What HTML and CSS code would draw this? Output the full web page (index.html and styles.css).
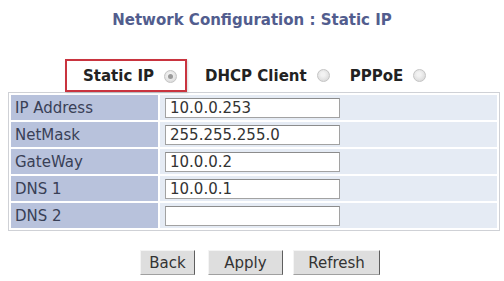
FILE: index.html
```html
<!DOCTYPE html>
<html>
<head>
    <title>Network Configuration</title>
    <link rel="stylesheet" href="styles.css">
</head>
<body>

<div class="title">Network Configuration : Static IP</div>

<div class="modes">
    <label class="mode mode-active">Static IP <span class="radio checked"></span></label>
    <label class="mode">DHCP Client <span class="radio"></span></label>
    <label class="mode">PPPoE <span class="radio"></span></label>
</div>

<table class="config">
    <tr>
        <td class="name">IP Address</td>
        <td class="value"><input type="text" value="10.0.0.253"></td>
    </tr>
    <tr>
        <td class="name">NetMask</td>
        <td class="value"><input type="text" value="255.255.255.0"></td>
    </tr>
    <tr>
        <td class="name">GateWay</td>
        <td class="value"><input type="text" value="10.0.0.2"></td>
    </tr>
    <tr>
        <td class="name">DNS 1</td>
        <td class="value"><input type="text" value="10.0.0.1"></td>
    </tr>
    <tr>
        <td class="name">DNS 2</td>
        <td class="value"><input type="text" value=""></td>
    </tr>
</table>

<div class="actions">
    <button class="btn btn-back">Back</button>
    <button class="btn btn-apply">Apply</button>
    <button class="btn btn-refresh">Refresh</button>
</div>

</body>
</html>
```

FILE: styles.css
```css
body {
    margin: 0;
    background-color: #ffffff;
    font-family: "DejaVu Sans", Tahoma, sans-serif;
    font-size: 15px;
    color: #333;
}

.title {
    padding-top: 11px;
    height: 18px;
    line-height: 18px;
    text-align: center;
    font-weight: bold;
    color: #525d8e;
}

.modes {
    display: flex;
    align-items: center;
    margin-top: 30px;
    padding-left: 65px;
}

.mode {
    display: flex;
    align-items: center;
    gap: 10px;
    font-weight: bold;
    color: #222;
    line-height: 18px;
    margin-right: 20px;
}

.mode-active {
    border: 2px solid #c9343f;
    box-shadow: 1px 1px 2px rgba(0, 0, 0, 0.15);
    padding: 6px 8px 5px 16px;
    margin-right: 18px;
}

.radio {
    width: 11px;
    height: 11px;
    border: 1px solid #c4c4c4;
    border-radius: 50%;
    background: radial-gradient(circle at 45% 40%, #f2f2f2 20%, #d2d2d2);
    position: relative;
}

.radio.checked::after {
    content: "";
    position: absolute;
    left: 3px;
    top: 3px;
    width: 5px;
    height: 5px;
    border-radius: 50%;
    background-color: #9a9a9a;
}

.config {
    margin-left: 8px;
    width: 492px;
    border: 1px solid #cfd1d6;
    border-spacing: 2px;
    background-color: #ffffff;
}

.config td {
    height: 25px;
    padding: 0;
}

.name {
    width: 143px;
    padding-left: 4px !important;
    background-color: #b8c2dc;
    color: #394056;
}

.value {
    padding-left: 5px !important;
    background-color: #e5ebf4;
}

.value input {
    display: block;
    box-sizing: border-box;
    width: 175px;
    height: 20px;
    padding: 0 4px;
    border: 1px solid #a2a2a2;
    border-top-color: #8c8c8c;
    background-color: #ffffff;
    font-family: "DejaVu Sans", Tahoma, sans-serif;
    font-size: 15px;
    color: #333;
}

.actions {
    display: flex;
    margin-top: 19px;
    padding-left: 140px;
}

.btn {
    height: 25px;
    padding: 0;
    border: 1px solid;
    border-color: #f4f4f4 #5e5e5e #a0a0a0 #f4f4f4;
    background-color: #dedede;
    font-family: "DejaVu Sans", Tahoma, sans-serif;
    font-size: 15px;
    color: #333;
}

.btn-back {
    width: 55px;
    margin-right: 13px;
}

.btn-apply {
    width: 75px;
    margin-right: 10px;
}

.btn-refresh {
    width: 87px;
}
```
